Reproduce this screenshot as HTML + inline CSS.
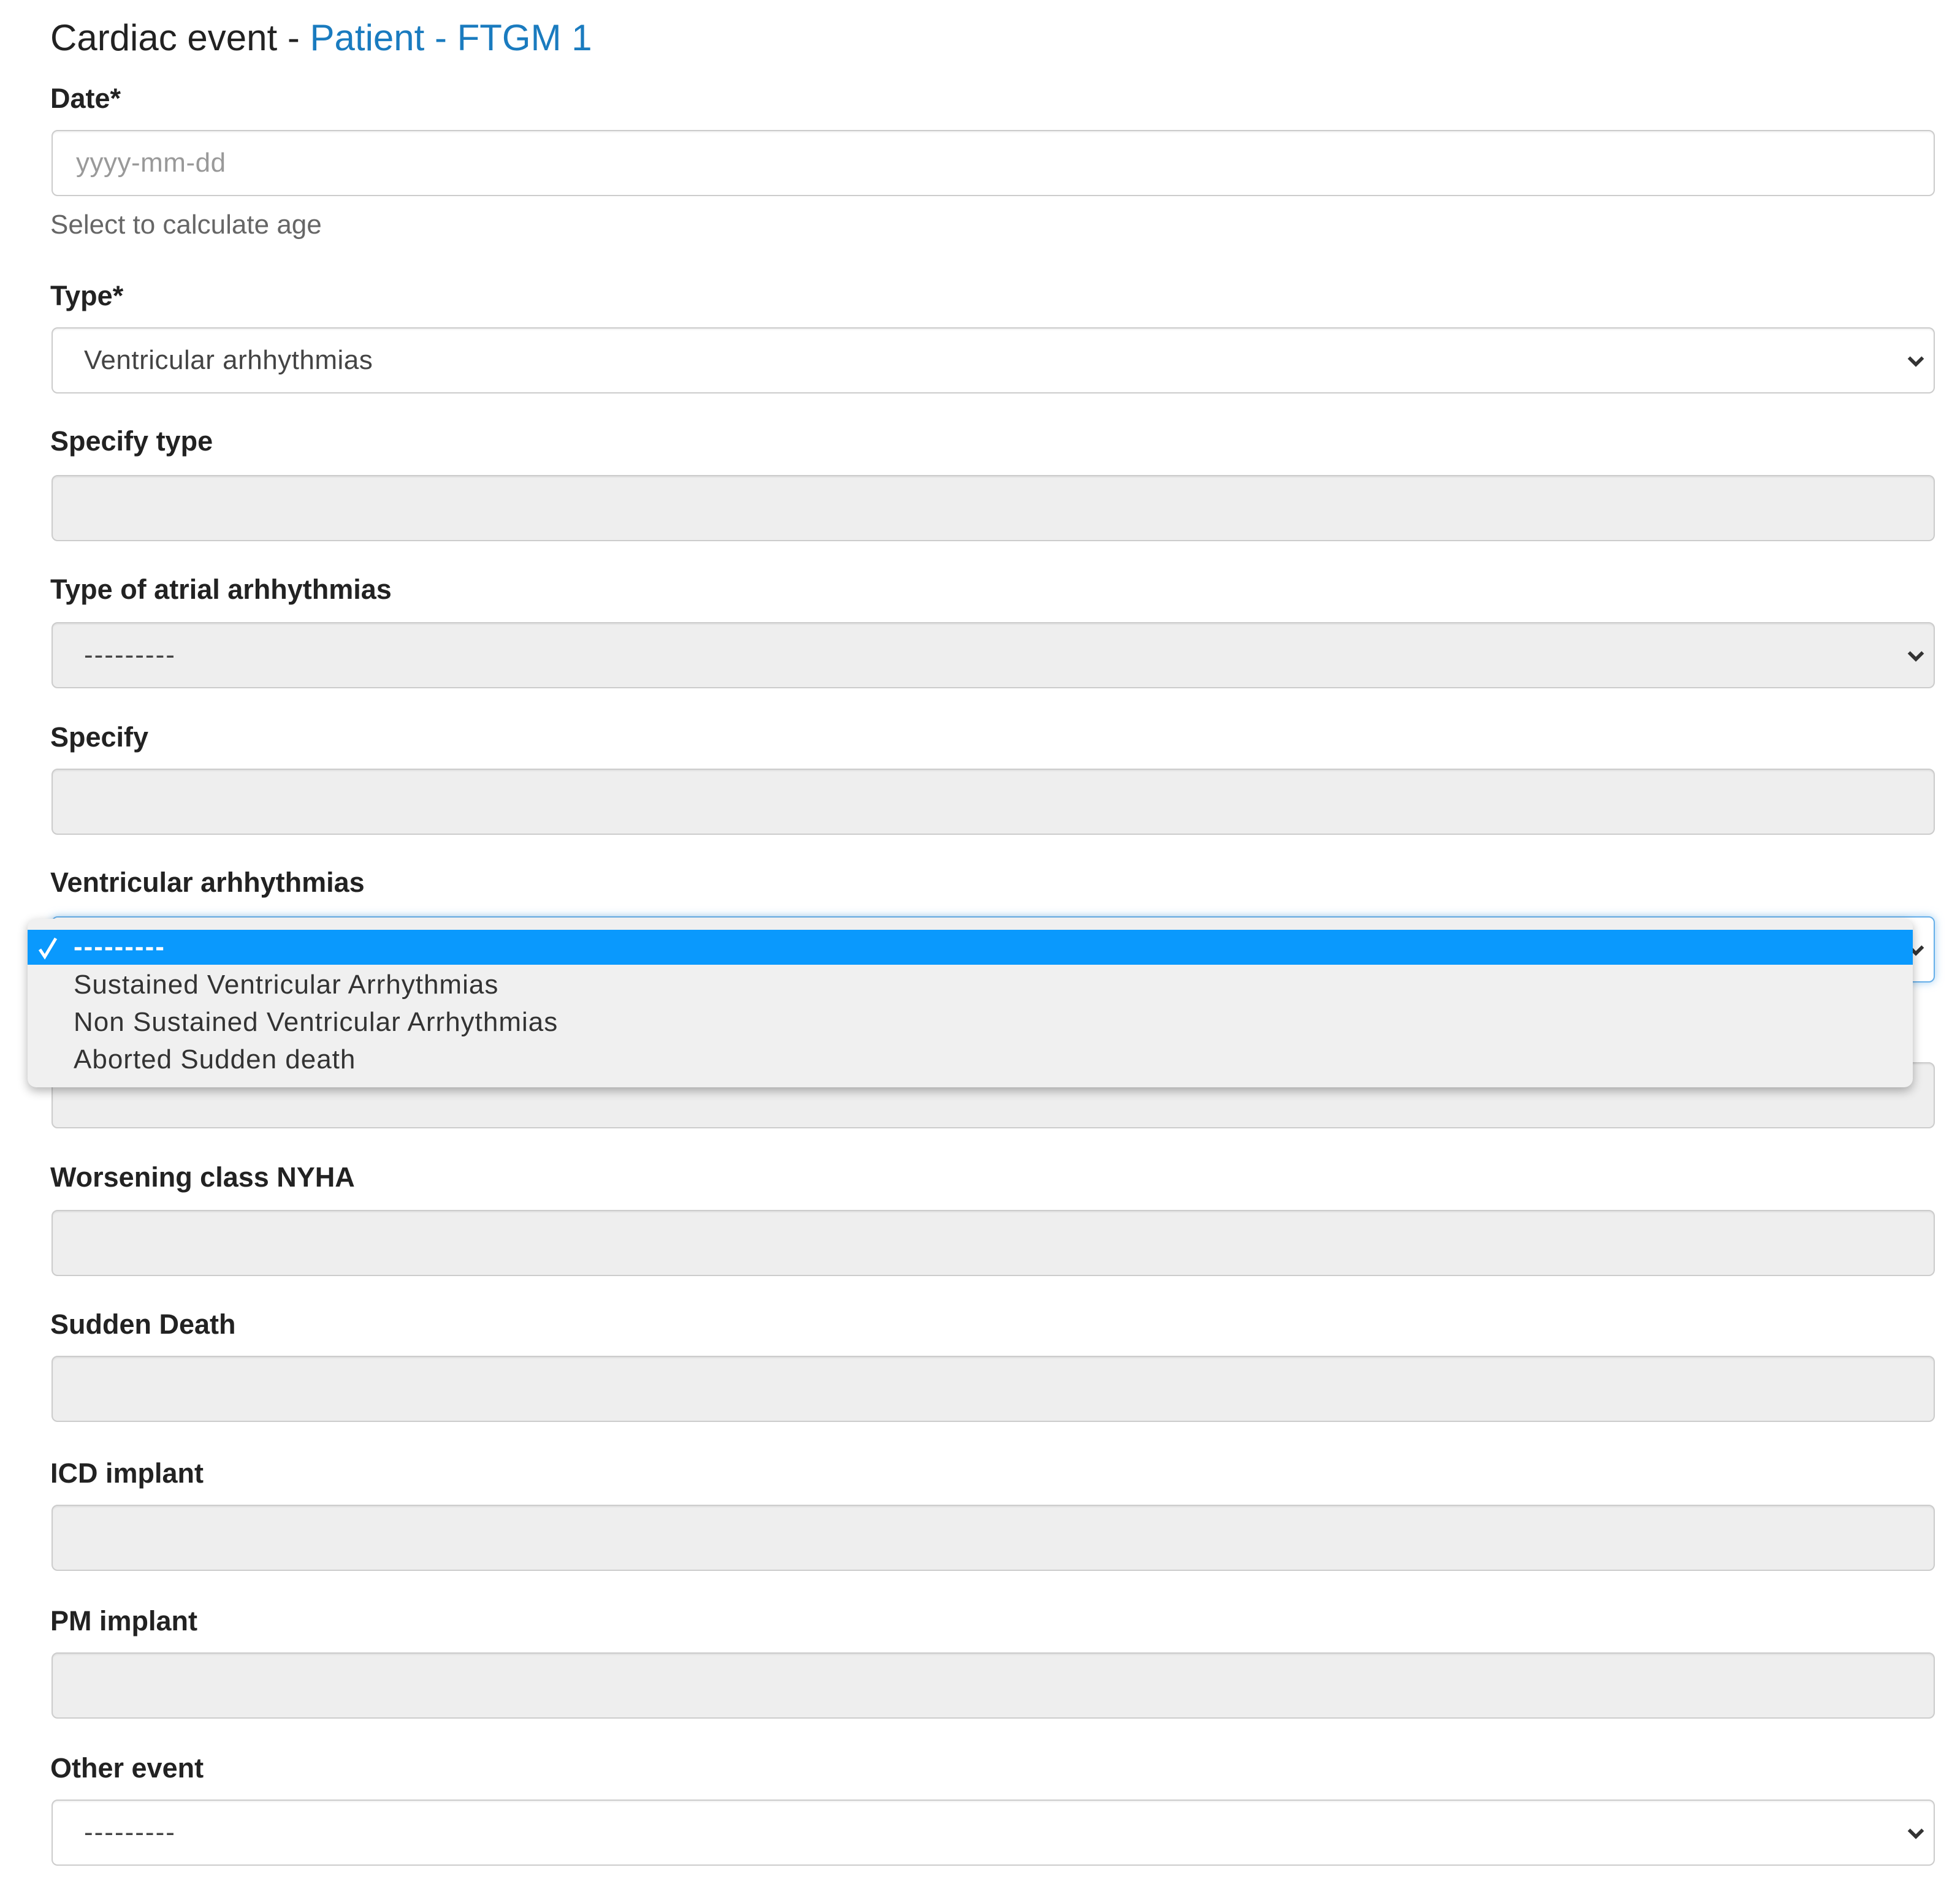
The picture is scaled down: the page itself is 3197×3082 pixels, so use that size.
<!DOCTYPE html>
<html><head><meta charset="utf-8"><style>
html,body{margin:0;padding:0;background:#fff;}
body{width:3197px;height:3082px;position:relative;overflow:hidden;font-family:"Liberation Sans",Arial,sans-serif;}
.t{position:absolute;white-space:nowrap;}
.title{left:82px;top:27px;font-size:60px;color:#222;line-height:70px;}
.title span{color:#1a7bbf;}
.lbl{position:absolute;left:82px;font-weight:bold;font-size:45px;color:#222;line-height:50px;}
.in{position:absolute;left:84px;width:3072px;height:108px;box-sizing:border-box;border:2px solid #ccc;border-radius:10px;background:#eee;box-shadow:inset 0 2px 2px rgba(0,0,0,.06);}
.in.w{background:#fff;}
.txt{position:absolute;left:51px;top:0;line-height:104px;font-size:44px;color:#444;letter-spacing:0.5px;}
.chev{position:absolute;right:12px;top:36px;width:34px;height:34px;}
.help{left:82px;font-size:44px;color:#666;line-height:50px;}
.dd{position:absolute;left:45px;top:1499px;width:3075px;height:275px;background:#f0f0f0;border-radius:14px;box-shadow:0 6px 16px rgba(0,0,0,.3);}
.hl{position:absolute;left:0;right:0;top:18px;height:57px;background:#0a99fd;}
.opt{position:absolute;left:75px;font-size:44px;color:#333;line-height:50px;letter-spacing:1px;}
</style></head><body>
<div class="t title">Cardiac event - <span>Patient - FTGM 1</span></div>

<div class="lbl" style="top:136px">Date*</div>
<div class="in w" style="top:212px"><div class="txt" style="left:38px;color:#999">yyyy-mm-dd</div></div>
<div class="t help" style="top:342px">Select to calculate age</div>

<div class="lbl" style="top:458px">Type*</div>
<div class="in w" style="top:534px"><div class="txt">Ventricular arhhythmias</div>
<svg class="chev" viewBox="0 0 30 30"><path d="M5 10 L15 20 L25 10" fill="none" stroke="#333" stroke-width="5"/></svg></div>

<div class="lbl" style="top:695px">Specify type</div>
<div class="in" style="top:775px"></div>

<div class="lbl" style="top:937px">Type of atrial arhhythmias</div>
<div class="in" style="top:1015px"><div class="txt" style="letter-spacing:2px">---------</div>
<svg class="chev" viewBox="0 0 30 30"><path d="M5 10 L15 20 L25 10" fill="none" stroke="#333" stroke-width="5"/></svg></div>

<div class="lbl" style="top:1178px">Specify</div>
<div class="in" style="top:1254px"></div>

<div class="lbl" style="top:1415px">Ventricular arhhythmias</div>
<div class="in w" style="top:1495px;border-color:#66afe9;box-shadow:0 0 14px rgba(102,175,233,.6)">
<svg class="chev" viewBox="0 0 30 30"><path d="M5 10 L15 20 L25 10" fill="none" stroke="#333" stroke-width="5"/></svg></div>

<div class="in" style="top:1733px"></div>

<div class="dd">
<div class="hl"></div>
<svg style="position:absolute;left:16px;top:28px" width="36" height="40" viewBox="0 0 36 40"><path d="M4 22 L12 34 L30 4" fill="none" stroke="#fff" stroke-width="5"/></svg>
<div class="opt" style="top:21px;color:#fff;font-weight:bold;letter-spacing:2px">---------</div>
<div class="opt" style="top:83px">Sustained Ventricular Arrhythmias</div>
<div class="opt" style="top:144px">Non Sustained Ventricular Arrhythmias</div>
<div class="opt" style="top:205px">Aborted Sudden death</div>
</div>

<div class="lbl" style="top:1896px">Worsening class NYHA</div>
<div class="in" style="top:1974px"></div>

<div class="lbl" style="top:2136px">Sudden Death</div>
<div class="in" style="top:2212px"></div>

<div class="lbl" style="top:2379px">ICD implant</div>
<div class="in" style="top:2455px"></div>

<div class="lbl" style="top:2620px">PM implant</div>
<div class="in" style="top:2696px"></div>

<div class="lbl" style="top:2860px">Other event</div>
<div class="in w" style="top:2936px"><div class="txt" style="letter-spacing:2px">---------</div>
<svg class="chev" viewBox="0 0 30 30"><path d="M5 10 L15 20 L25 10" fill="none" stroke="#333" stroke-width="5"/></svg></div>
</body></html>
